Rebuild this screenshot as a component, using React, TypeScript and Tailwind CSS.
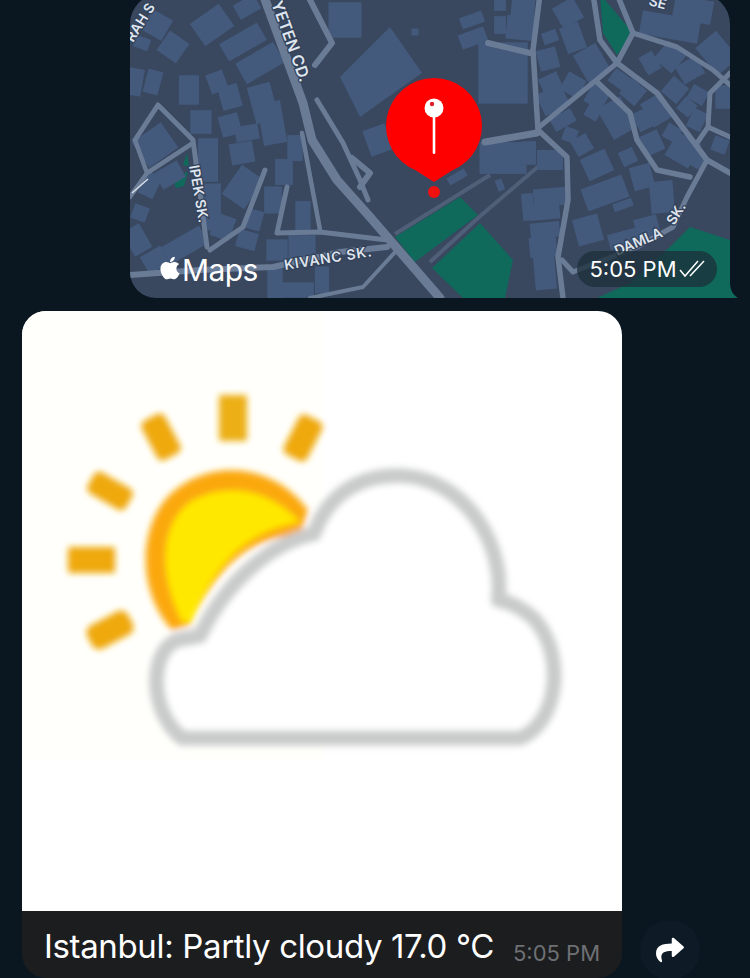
import React from 'react';
import { FaApple, FaShare } from 'react-icons/fa';

// cx, cy, w, h, rotation
const buildings: number[][] = [
  [157, 25, 20, 20, 30], [173, 47, 20, 20, 35], [212, 25, 30, 23, -35], [243, 42, 37, 17, -30], [260, 63, 37, 20, -30],
  [247, 7, 20, 14, -30], [142, 43, 13, 10, 20], [135, 82, 13, 23, 10], [153, 82, 13, 20, 15], [189, 90, 17, 25, 0],
  [217, 82, 15, 17, -20], [230, 97, 17, 20, -15], [201, 122, 18, 20, 0], [230, 125, 17, 18, -15], [247, 133, 20, 13, -10],
  [242, 153, 20, 18, -10], [263, 103, 20, 32, -15], [272, 123, 20, 36, -10], [295, 148, 13, 22, 0], [208, 160, 17, 37, 0],
  [212, 207, 15, 40, 0], [243, 187, 23, 30, 35], [284, 172, 15, 22, 0], [273, 200, 15, 23, 0], [303, 217, 13, 27, 0],
  [255, 220, 12, 17, 15], [247, 240, 17, 15, 15], [223, 227, 17, 20, 20], [185, 245, 37, 17, -30], [277, 250, 18, 18, 0],
  [302, 247, 23, 20, 0], [275, 283, 13, 30, 0], [298, 290, 27, 13, 0], [322, 280, 12, 23, 0], [140, 213, 13, 13, 20],
  [137, 240, 17, 23, -30], [155, 260, 20, 17, -30], [155, 145, 30, 26, -35], [170, 175, 16, 22, 60], [150, 185, 14, 20, 25],
  [378, 140, 20, 23, -20], [415, 32, 6, 6, 0], [503, 73, 42, 52, 0], [472, 20, 20, 10, -20], [473, 38, 23, 13, -20],
  [500, 25, 10, 15, 0], [520, 28, 23, 20, 5], [500, 5, 10, 10, 0], [523, 8, 20, 17, 5], [550, 37, 13, 10, -20],
  [548, 59, 17, 18, -15], [550, 82, 17, 12, -25], [553, 100, 23, 20, -25], [568, 13, 20, 20, -30], [573, 38, 17, 23, -20],
  [592, 63, 22, 27, -30], [573, 85, 17, 17, 30], [597, 97, 17, 17, 30], [593, 112, 12, 12, 30], [563, 120, 20, 12, -30],
  [570, 135, 12, 12, 20], [582, 145, 15, 15, -30], [617, 118, 23, 30, -30], [597, 165, 23, 20, -25], [628, 157, 13, 13, -25],
  [642, 177, 18, 20, -15], [605, 193, 37, 20, -20], [623, 205, 17, 7, -20], [588, 230, 22, 23, -15], [662, 197, 20, 27, -5],
  [643, 120, 13, 17, -25], [657, 110, 20, 23, -30], [652, 143, 17, 18, -25], [672, 133, 13, 13, 30], [633, 92, 17, 17, 40],
  [620, 80, 17, 13, 35], [650, 63, 13, 17, -30], [670, 57, 20, 20, 40], [690, 70, 20, 17, -30], [675, 90, 17, 17, 40],
  [698, 95, 15, 13, 30], [687, 107, 13, 13, 40], [697, 120, 13, 17, 25], [683, 150, 23, 23, 30], [697, 160, 13, 13, 30],
  [720, 145, 13, 13, 20], [670, 27, 50, 20, 10], [693, 10, 33, 20, 10], [717, 53, 23, 30, -40], [723, 97, 13, 20, 0],
  [630, 237, 37, 13, -15], [647, 227, 20, 17, -15], [550, 197, 28, 15, -5], [545, 212, 25, 13, -5], [545, 230, 25, 13, -5],
  [543, 247, 23, 17, -5], [545, 273, 18, 28, -5], [528, 207, 10, 23, -5], [503, 158, 40, 27, 0], [529, 153, 12, 20, 0],
  [550, 160, 22, 17, 0], [457, 177, 17, 7, -30], [500, 185, 6, 10, -20], [345, 20, 28, 30, 0],
];

const roads: { d: string; w: number }[] = [
  { d: 'M263 -6 L303 103 L312 140 L337 180 L370 217 L440 298', w: 9 },
  { d: 'M307 -6 L332 43 L315 65', w: 6 },
  { d: 'M317 100 L343 143 L360 180 L368 200', w: 5 },
  { d: 'M352 158 L370 173 L360 187', w: 6 },
  { d: 'M135 140 L158 105 L193 140 L207 247', w: 5 },
  { d: 'M135 140 L147 173 L193 143 M147 173 L130 197', w: 4.5 },
  { d: 'M130 275 L200 270 L273 267 L340 252 L387 247', w: 6 },
  { d: 'M210 250 L243 227 L265 170', w: 5 },
  { d: 'M302 133 L320 230', w: 4.5 },
  { d: 'M287 187 L277 233 L320 232 L387 240', w: 5 },
  { d: 'M397 250 L363 287 L310 298', w: 4 },
  { d: 'M540 -6 L533 50 L538 130 L567 157 L568 200 L558 257 L563 298', w: 5.5 },
  { d: 'M488 43 L530 53', w: 6 },
  { d: 'M485 142 L537 133', w: 7 },
  { d: 'M538 128 L617 63', w: 5 },
  { d: 'M593 -6 L600 40 L617 63 L633 33 L617 -6', w: 5.5 },
  { d: 'M633 33 L677 47 L713 70 L730 85', w: 5 },
  { d: 'M617 63 L657 93 L707 160 L730 173', w: 5.5 },
  { d: 'M597 82 L630 113 L637 140 L657 170 L690 177', w: 5.5 },
  { d: 'M707 160 L687 197 L673 227 L637 247 L573 272 L562 260', w: 5 },
  { d: 'M730 73 L710 93 L708 127 L730 137 M708 127 L697 143', w: 5 },
];

const MapView: React.FC = () => (
  <svg className="block w-full h-full" viewBox="130 -6 600 304">
    <rect x="130" y="-6" width="600" height="304" fill="#39475f" />
    <g fill="#0f6a5c">
      <polygon points="395,237 460,197 478,215 415,262" />
      <polygon points="480,223 513,260 505,298 463,298 432,268" />
      <polygon points="690,227 730,240 730,298 597,298 630,283 670,247" />
      <polygon points="600,-6 633,33 617,55 603,33" />
      <polygon points="187,153 189,166 183,165" />
      <polygon points="172,178 188,172 184,186 176,188" />
    </g>
    <g fill="none" stroke="#4f5f78" strokeWidth="4">
      <path d="M395 234 L490 175" />
      <path d="M430 262 L478 218 L540 165" />
    </g>
    <g fill="#435a7d">
      <polygon points="340,77 390,27 422,73 360,117" />
      {buildings.map(([cx, cy, w, h, r], i) => {
        const bw = w * 1.18;
        const bh = h * 1.18;
        return <rect key={i} x={cx - bw / 2} y={cy - bh / 2} width={bw} height={bh} transform={`rotate(${r} ${cx} ${cy})`} />;
      })}
    </g>
    <g fill="none" stroke="#6a7b96" strokeLinejoin="round" strokeLinecap="round">
      {roads.map((r, i) => (
        <path key={i} d={r.d} strokeWidth={r.w} />
      ))}
    </g>
    <path d="M132 193 L148 179" stroke="#d8e0ea" strokeWidth="1.5" />
    <g
      fontFamily="Inter, sans-serif"
      fontWeight="600"
      fontSize="14"
      fill="#dfe5ee"
      stroke="#33425a"
      strokeWidth="2.5"
      paintOrder="stroke"
    >
      <text transform="translate(271 3) rotate(70)" fontSize="16">YETEN CD.</text>
      <text transform="translate(189 166) rotate(80)">IPEK SK.</text>
      <text transform="translate(285 270) rotate(-9)" letterSpacing="0.8">KIVANC SK.</text>
      <text transform="translate(617 256) rotate(-23)">DAMLA</text>
      <text transform="translate(674 226) rotate(-58)">SK.</text>
      <text transform="translate(133 43) rotate(-58)">RAH S</text>
      <text transform="translate(648 5) rotate(15)">SE</text>
    </g>
    {/* pin */}
    <path d="M434 78 a48 48 0 0 1 18 92.5 L434 182 L416 170.5 A48 48 0 0 1 434 78 Z" fill="#fe0000" />
    <circle cx="434" cy="192" r="6" fill="#f01010" />
    <rect x="432.7" y="112" width="2.6" height="42" rx="1.3" fill="#ffffff" />
    <circle cx="434" cy="108" r="9.5" fill="#ffffff" />
    <circle cx="432" cy="104" r="2.2" fill="#e11d2a" />
  </svg>
);

const WeatherIcon: React.FC = () => (
  <svg className="block w-full h-full" viewBox="22 311 600 600">
    <defs>
      <filter id="soft" x="-10%" y="-10%" width="120%" height="120%">
        <feGaussianBlur stdDeviation="3" />
      </filter>
    </defs>
    <rect x="22" y="311" width="300" height="450" fill="#fffffb" />
    <g filter="url(#soft)">
      <g fill="#efa90e">
        <rect x="219" y="395" width="28" height="46" rx="2" fill="#ecb012" />
        <rect x="-13" y="-22" width="26" height="44" rx="6" transform="translate(161 437) rotate(-28)" />
        <rect x="-13" y="-22" width="26" height="44" rx="6" transform="translate(303 438) rotate(27)" />
        <rect x="-12" y="-22" width="24" height="44" rx="6" transform="translate(110 491) rotate(-60)" />
        <rect x="68" y="547" width="47" height="26" rx="2" />
        <rect x="-13" y="-23" width="26" height="46" rx="8" transform="translate(110 630) rotate(62)" />
      </g>
      <path d="M172 630 C135 590 138 520 175 490 C215 458 275 465 308 510 L300 535 C250 535 215 570 190 625 Z" fill="#fba80c" />
      <path d="M182 622 C158 572 160 525 190 502 C225 482 268 488 300 522 C250 530 215 560 192 622 Z" fill="#ffe800" />
      <path
        d="M178 640 C150 650 148 710 182 738 L520 738 C555 725 568 660 535 620 C525 610 510 602 498 600 C505 550 470 482 405 476 C365 474 330 490 314 534 C275 542 228 578 200 636 Z"
        fill="#ffffff"
        stroke="#c9caca"
        strokeWidth="15"
        strokeLinejoin="round"
      />
    </g>
  </svg>
);

const App: React.FC = () => {
  return (
    <div className="h-[978px] overflow-hidden bg-[#0a1620] font-['Inter',sans-serif]">
      <div className="relative -mt-[6px] ml-[130px] h-[304px] w-[600px]">
        <div className="h-full overflow-hidden rounded-t-[30px] rounded-bl-[26px] rounded-br-[8px]">
          <MapView />
        </div>
        <svg className="absolute right-[-8px] bottom-0 h-[16px] w-[24px]" viewBox="0 0 24 16">
          <path d="M16 0 C16 8 19 13 24 16 L0 16 C8 15 13 10 16 0 Z" fill="#0f6a5c" />
        </svg>
        <div className="absolute bottom-[10px] left-[28px] flex items-center text-white">
          <FaApple className="-mt-[4px] h-[26px] w-[24px]" />
          <span className="text-[30px] leading-[36px] tracking-[-0.6px]">Maps</span>
        </div>
        <div className="absolute right-[13px] bottom-[11px] flex h-[36px] w-[140px] items-center justify-center gap-[2px] rounded-full bg-[#1c2f3a]/75 pl-[4px] text-[22px] text-white">
          <span>5:05 PM</span>
          <svg className="h-[18px] w-[30px]" viewBox="0 0 30 18" fill="none" stroke="#ffffff" strokeWidth="1.5">
            <path d="M1 10 L6 16 L19 1" />
            <path d="M11 16 L25 1" />
          </svg>
        </div>
      </div>
      <div className="mt-[13px] ml-[22px] flex items-end">
        <div className="w-[600px] overflow-hidden rounded-t-[24px]">
          <div className="h-[600px] bg-white">
            <WeatherIcon />
          </div>
          <div className="flex h-[67px] items-start justify-between rounded-b-[24px] bg-[#1c1d1f] px-[22px] pt-[15px]">
            <span className="text-[33px] leading-[40px] tracking-[-0.35px] text-white">Istanbul: Partly cloudy 17.0 °C</span>
            <span className="mt-[13px] text-[22px] leading-[28px] text-[#6e7074]">5:05 PM</span>
          </div>
        </div>
        <div className="mb-[-2px] ml-[18px] flex h-[60px] w-[60px] items-center justify-center rounded-full bg-[#0e1a26] text-white">
          <FaShare className="h-[28px] w-[28px]" />
        </div>
      </div>
    </div>
  );
};

export default App;
